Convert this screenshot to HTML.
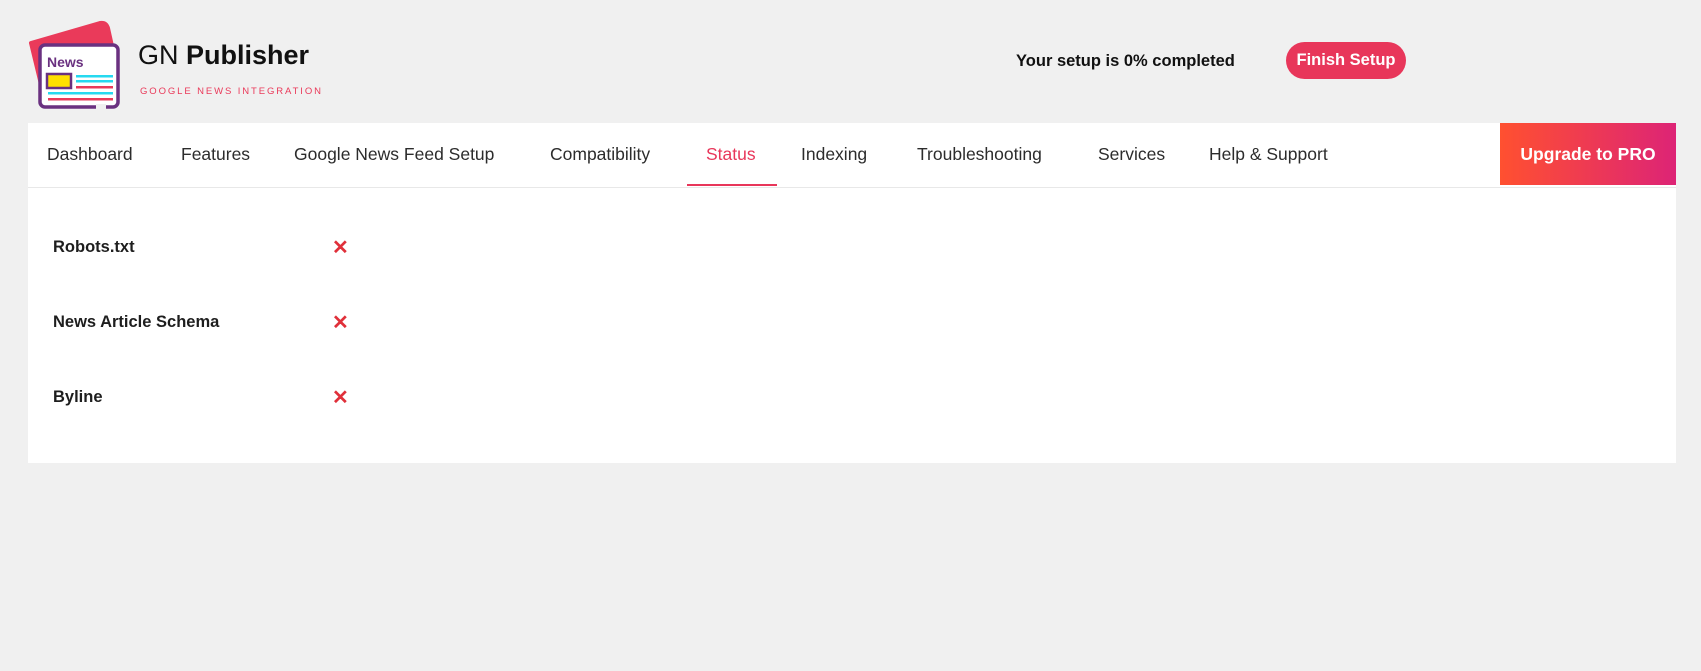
<!DOCTYPE html>
<html><head><meta charset="utf-8"><style>
body{margin:0;width:1701px;height:671px;background:#f0f0f0;font-family:"Liberation Sans",sans-serif;position:relative;overflow:hidden}
.a{position:absolute;white-space:nowrap}
.nav{position:absolute;left:28px;top:123px;width:1648px;height:64px;background:#fff;border-bottom:1px solid #e8e8e8}
.nav span{position:absolute;top:21px;font-size:17.5px;color:#2c2c2c}
.panel{position:absolute;left:28px;top:188px;width:1648px;height:275px;background:#fff}
.row{position:absolute;left:25px;font-size:16.5px;color:#1e1e1e;font-weight:600}
.x{position:absolute;left:304px;font-size:20px;color:#e0303a;font-weight:bold}
</style></head><body>
<svg class="a" style="left:26px;top:20px" width="100" height="95" viewBox="0 0 100 95">
<path d="M5 23 L74 3 Q80 2 82 8 L88 35 L20 85 Z" fill="#ea3a5a" stroke="#ea3a5a" stroke-linejoin="round" stroke-width="4"/>
<rect x="14" y="25" width="78" height="62" rx="5" fill="#fff" stroke="#6a3180" stroke-width="3.5"/>
<text x="21" y="47" font-family="Liberation Sans" font-weight="bold" font-size="14" fill="#6a3180">News</text>
<rect x="21" y="54" width="24" height="14" fill="#ffe000" stroke="#6a3180" stroke-width="2.5"/>
<rect x="50" y="55" width="37" height="2.5" fill="#26d9f0"/><rect x="50" y="60" width="37" height="2.5" fill="#26d9f0"/>
<rect x="50" y="66" width="37" height="2.5" fill="#ea3a5a"/><rect x="22" y="72" width="65" height="2.5" fill="#26d9f0"/>
<rect x="22" y="78" width="65" height="2.5" fill="#ea3a5a"/>
<rect x="70" y="84" width="10" height="6" fill="#f0f0f0"/>
</svg>
<div class="a" style="left:138px;top:40px;font-size:27px;color:#111"><span style="font-weight:300">GN</span> <b>Publisher</b></div>
<div class="a" style="left:140px;top:86px;font-size:9.5px;letter-spacing:1.9px;color:#ea3a5a">GOOGLE NEWS INTEGRATION</div>
<div class="a" style="left:1016px;top:52px;font-size:16.5px;font-weight:bold;color:#111">Your setup is 0% completed</div>
<div class="a" style="left:1286px;top:42px;width:120px;height:37px;border-radius:19px;background:#e8365a;color:#fff;font-size:16.5px;font-weight:600;text-align:center;line-height:37px">Finish Setup</div>
<div class="nav">
<span style="left:19px">Dashboard</span><span style="left:153px">Features</span><span style="left:266px">Google News Feed Setup</span><span style="left:522px">Compatibility</span><span style="left:678px;color:#e8365a">Status</span><span style="left:773px">Indexing</span><span style="left:889px">Troubleshooting</span><span style="left:1070px">Services</span><span style="left:1181px">Help &amp; Support</span>
<div style="position:absolute;left:659px;top:61px;width:90px;height:2px;background:#e8365a"></div>
<div style="position:absolute;left:1472px;top:0;width:176px;height:62px;background:linear-gradient(90deg,#ff5030,#dd2476);color:#fff;font-size:17.5px;font-weight:600;line-height:62px;text-align:center">Upgrade to PRO</div>
</div>
<div class="panel">
<div class="row" style="top:50px">Robots.txt</div><div class="x" style="top:47px">✕</div>
<div class="row" style="top:125px">News Article Schema</div><div class="x" style="top:122px">✕</div>
<div class="row" style="top:200px">Byline</div><div class="x" style="top:197px">✕</div>
</div>
</body></html>
